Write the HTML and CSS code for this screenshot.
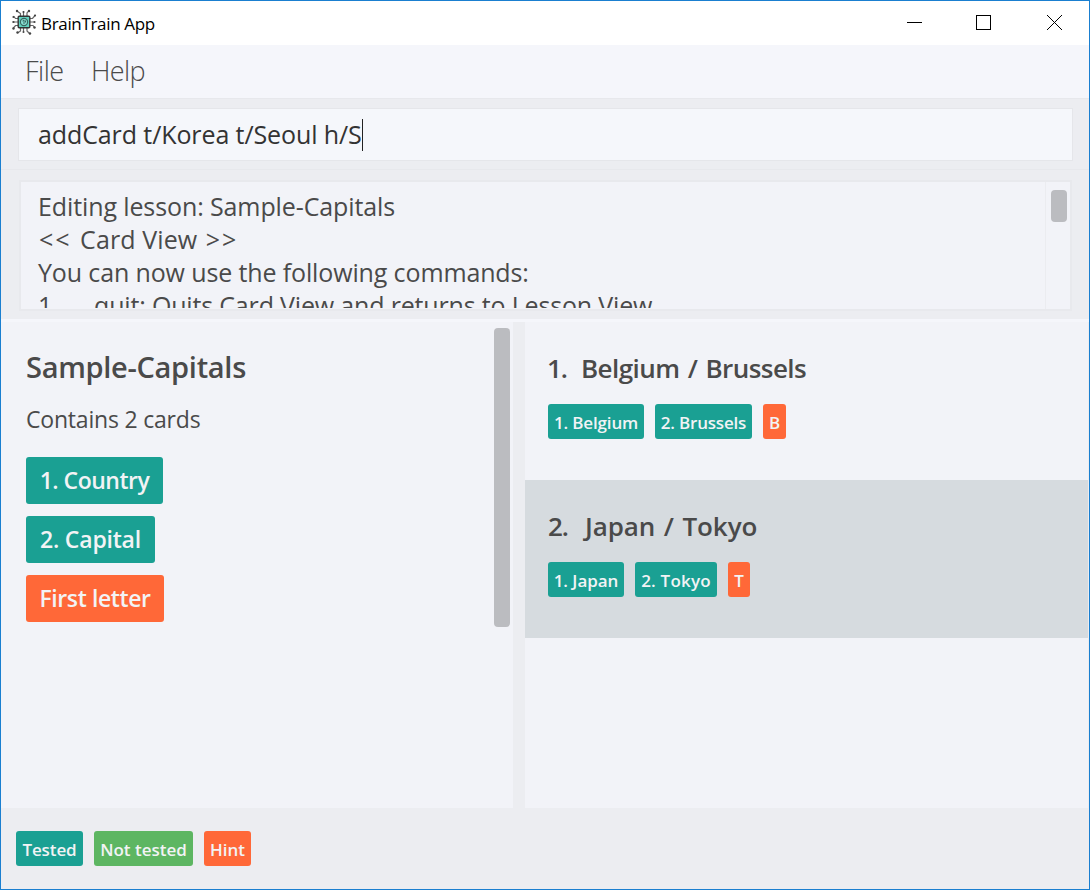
FILE: index.html
```
<!DOCTYPE html>
<html lang="en">
<head>
<meta charset="utf-8">
<title>BrainTrain App</title>
<link rel="stylesheet" href="styles.css">
</head>
<body>
<div class="window">
  <header class="titlebar">
    <svg class="logo" width="26" height="26" viewBox="0 0 26 26">
      <g fill="none" stroke="#666" stroke-width="1.2">
        <path d="M9.500 7V4.500L6 2M12.500 7V2M16 7V4l2-2.500M9.500 19v3l-3 2M12.500 19v3.500M16 19v3l3 3M7 9.500H4.500L2.500 7M7 13H1.500M7 16.500H4.500L2 19.500M19 9.500h2.500l3-3.500M19 13h4.500M19 16.500h3l2 2.500"/>
      </g>
      <g fill="#444"><circle cx="6" cy="2" r="1.200"/><circle cx="12.500" cy="3" r="1"/><circle cx="18" cy="2" r="1.200"/><circle cx="6.500" cy="23.500" r="1.200"/><circle cx="12.500" cy="23" r="1"/><circle cx="19" cy="24.500" r="1.200"/><circle cx="2.500" cy="8" r="1.100"/><circle cx="2.500" cy="13" r="1.100"/><circle cx="2.500" cy="19.500" r="1.200"/><circle cx="24" cy="6.500" r="1.100"/><circle cx="23.500" cy="13" r="1.100"/><circle cx="23.500" cy="18.500" r="1.200"/></g>
      <rect x="7.200" y="7.200" width="11.600" height="11.600" rx="1" fill="#62d2c0" stroke="#333" stroke-width="1.400"/>
      <circle cx="13" cy="13" r="3.600" fill="#8be0d4" stroke="#37665f" stroke-width="1.200"/>
      <path d="M11.500 12l1.500-1v4M14.500 11.500v2" fill="none" stroke="#37665f"/>
    </svg>
    <span class="app-name">BrainTrain App</span>
    <svg class="controls" width="156" height="16" viewBox="0 0 156 16" fill="none" stroke="#000" shape-rendering="crispEdges">
      <path d="M0 7.500h15"/>
      <rect x="69.500" y="0.500" width="14" height="14"/>
      <path d="M140 0l15 15M155 0l-15 15" shape-rendering="auto"/>
    </svg>
  </header>
  <nav class="menu"><span class="file">File</span><span class="help">Help</span></nav>
  <section class="command"><div class="field"><span>addCard t/Korea t/Seoul h/S</span><i class="caret"></i></div></section>
  <section class="result">
    <div class="result-box">
      <div class="lines">
        <div class="l1">Editing lesson: Sample-Capitals</div>
        <div class="l2">&lt;&lt; <span class="view">Card View</span> &gt;&gt;</div>
        <div class="l3">You can now use the following commands:</div>
        <div class="l4"><span class="step">1.</span>quit: Quits Card View and returns to Lesson View</div>
      </div>
      <div class="track"><div class="thumb"></div></div>
    </div>
  </section>
  <main class="panes">
    <section class="lesson">
      <div class="lesson-info">
        <h1>Sample-Capitals</h1>
        <p>Contains 2 cards</p>
        <div class="fields">
          <span class="tag big country">1. Country</span>
          <span class="tag big capital">2. Capital</span>
          <span class="tag big hint first">First letter</span>
        </div>
      </div>
      <div class="pane-thumb"></div>
    </section>
    <section class="cards">
      <article class="card belgium">
        <h2><span class="num">1.</span><span class="name">Belgium / Brussels</span></h2>
        <div class="tags"><span class="tag t96">1. Belgium</span><span class="tag t97">2. Brussels</span><span class="tag hint t23">B</span></div>
      </article>
      <article class="card japan">
        <h2><span class="num">2.</span><span class="name">Japan / Tokyo</span></h2>
        <div class="tags"><span class="tag t76">1. Japan</span><span class="tag t82">2. Tokyo</span><span class="tag hint t22">T</span></div>
      </article>
    </section>
  </main>
  <footer class="legend"><span class="tag t67">Tested</span><span class="tag untested t99">Not tested</span><span class="tag hint t47">Hint</span></footer>
</div>
</body>
</html>
```
FILE: styles.css
```
* { box-sizing: border-box; }
body { margin: 0; font-family: "Open Sans", "Noto Sans", sans-serif; color: #4a4a4a; }
.window { width: 1090px; height: 890px; border: 1px solid #1a7fd0; background: #ecedf1; display: flex; flex-direction: column; overflow: hidden; white-space: nowrap; }
.titlebar { height: 44px; flex: none; background: #fff; display: flex; align-items: center; padding: 0 26px 0 10px; }
.logo { flex: none; margin-bottom: 2px; }
.app-name { flex: 1; margin: 0 0 0 4px; font-size: 17px; letter-spacing: -0.33px; color: #000; }
.controls { flex: none; }
.menu { height: 53px; flex: none; background: #f5f6fb; display: flex; gap: 28px; padding: 7px 0 0 24px; font-size: 27px; font-weight: 300; line-height: 38px; }
.file { width: 38px; letter-spacing: -0.5px; }
.help { letter-spacing: -0.6px; }
.command { height: 72px; flex: none; padding: 9px 16px 0 17px; border-top: 1px solid #e7e8ec; border-bottom: 1px solid #e7e8ec; }
.field { height: 53px; border: 1px solid #e5e6ea; background: #f5f7fb; display: flex; align-items: center; padding-left: 19px; font-size: 25px; line-height: 33px; letter-spacing: -0.1px; color: #333; }
.caret { width: 1px; height: 32px; background: #222; }
.result { height: 149px; flex: none; padding: 10px 17px 0 18px; }
.result-box { height: 131px; border: 2px solid #e8e9ed; background: #f2f3f8; display: flex; overflow: hidden; }
.lines { flex: 1; height: 126px; overflow: hidden; padding: 8px 0 0 17px; font-size: 25px; line-height: 33px; }
.l1 { letter-spacing: -0.11px; }
.l2 { letter-spacing: 2px; padding-left: 1px; }
.view { letter-spacing: 0.1px; }
.l3 { letter-spacing: -0.13px; }
.l4 { letter-spacing: -0.17px; }
.step { display: inline-block; width: 56px; }
.track { width: 25px; border-left: 1px solid #ebecf0; padding: 8px 0 0 5px; }
.thumb { width: 16px; height: 32px; border-radius: 4px; background: #bbbcc0; }
.panes { height: 489px; flex: none; display: grid; grid-template-columns: 512px 563px; column-gap: 12px; border-top: 3px solid #f5f6fb; }
.lesson { background: #f2f3f8; display: flex; justify-content: space-between; padding: 6px 3px 0 25px; }
.lesson-info { padding-top: 19px; }
h1 { margin: 0; font-size: 29px; line-height: 40px; font-weight: 600; letter-spacing: -0.3px; }
p { margin: 16px 0 0; font-size: 23px; line-height: 32px; letter-spacing: -0.2px; }
.fields { display: flex; flex-direction: column; gap: 12px; margin-top: 22px; }
.pane-thumb { width: 16px; height: 299px; border-radius: 4px; background: #bbbcc0; }
.tag { height: 35px; padding-top: 1px; border-radius: 3px; background: #1aa093; color: #f2f3f5; font-size: 17px; font-weight: 600; display: flex; align-items: center; justify-content: center; }
.big { height: 47px; padding: 0 0 1px; font-size: 23px; }
.hint { background: #ff6838; }
.untested { background: #5db662; }
.country { width: 137px; letter-spacing: -0.5px; }
.capital { width: 129px; letter-spacing: -0.2px; }
.first { width: 138px; letter-spacing: -0.4px; }
.cards { background: #f2f3f8; }
.card { height: 158px; padding: 28px 0 0 23px; }
.japan { background: #d6dbdf; }
h2 { margin: 0; font-size: 26px; line-height: 36px; font-weight: 600; display: flex; word-spacing: 2px; }
.num { width: 33px; letter-spacing: -1px; }
.belgium .num { width: 34px; margin-left: -1px; }
.belgium .name { letter-spacing: -0.55px; }
.japan .num { width: 37px; }
.japan .name { letter-spacing: -0.1px; }
.tags { display: flex; gap: 11px; margin-top: 18px; }
.t96 { width: 96px; letter-spacing: -0.15px; }
.t97 { width: 97px; letter-spacing: -0.2px; }
.t23 { width: 23px; }
.t76 { width: 76px; letter-spacing: -0.05px; }
.t82 { width: 82px; letter-spacing: 0.2px; }
.t22 { width: 22px; }
.t67 { width: 67px; letter-spacing: -0.1px; }
.t99 { width: 99px; letter-spacing: 0; }
.t47 { width: 47px; }
.legend { flex: 1; display: flex; gap: 11px; padding: 23px 0 0 15px; }
```
